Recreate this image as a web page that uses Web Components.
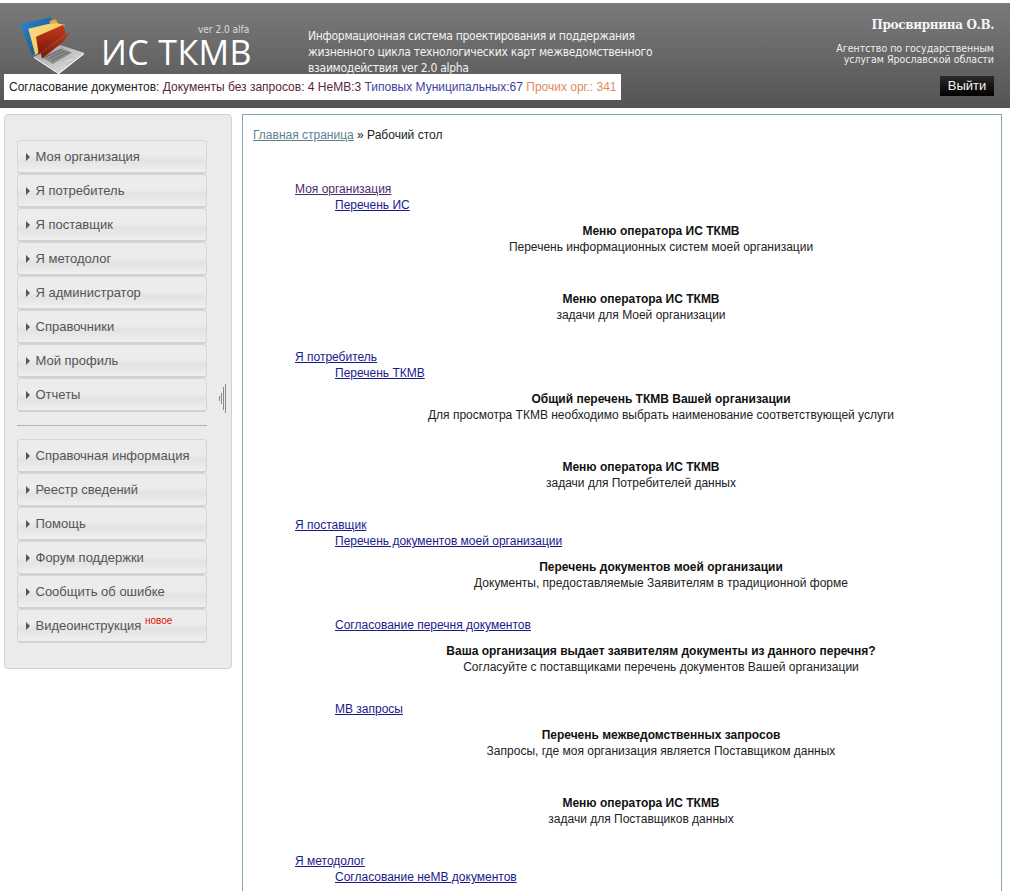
<!DOCTYPE html>
<html><head><meta charset="utf-8">
<style>
html,body{margin:0;padding:0;background:#fff;overflow:hidden;height:891px}
body{font-family:"Liberation Sans",Arial,sans-serif;font-size:12px;color:#000}
</style></head><body>
<template id="t-header"><style>
:host{display:block;height:105px;margin-top:3px;background:linear-gradient(#7a7a7a,#545454);position:relative;color:#fff}
.row{display:flex;height:73px}
.logo{width:296px;position:relative;flex:none}
.logo svg{position:absolute;left:10px;top:7px}
.ver{position:absolute;left:198px;top:21px;font:10px/12px "DejaVu Sans Condensed","DejaVu Sans",sans-serif;color:#ddd;white-space:nowrap}
.name{position:absolute;left:101px;top:34px;font:34px/30px "Open Sans","Liberation Sans",sans-serif;white-space:nowrap;letter-spacing:.4px;color:#fff}
.sys{margin-left:12px;padding-top:25px;font:12px/16px "DejaVu Sans Condensed","DejaVu Sans",sans-serif;color:#f2f2f2;width:350px;white-space:nowrap;letter-spacing:-.28px}
.user{margin-left:auto;padding:14px 16px 0 0;text-align:right}
.user b{display:block;font:bold 12px/16px "DejaVu Serif",serif;color:#f4f4f4;letter-spacing:-.35px}
.user span{display:block;margin-top:10px;font:10.5px/11px "DejaVu Sans Condensed","DejaVu Sans",sans-serif;color:#eee}
.status{position:absolute;left:4px;top:71px;background:#fff;height:26px;width:617px;box-sizing:border-box;padding-left:5px;font:12px/26px "Liberation Sans",sans-serif;white-space:nowrap;color:#222}
.a{color:#5a2440}.b{color:#3e3e9e}.c{color:#e08a5c}
.exit{position:absolute;right:16px;top:73px;width:54px;height:20px;background:linear-gradient(#2a2a2a,#000);font:13px/20px "Liberation Sans",sans-serif;text-align:center;color:#f4f4f4}
</style>
<div class="row">
<div class="logo">
<svg width="90" height="70" viewBox="0 0 270 210">
<defs>
<linearGradient id="bl" x1="0" y1="0" x2="1" y2="1"><stop offset="0" stop-color="#2b8ad0"/><stop offset="1" stop-color="#0f4a80"/></linearGradient>
<linearGradient id="ye" x1="0" y1="0" x2="1" y2="1"><stop offset="0" stop-color="#fbe08a"/><stop offset="1" stop-color="#eeb84a"/></linearGradient>
<linearGradient id="rd" x1="0" y1="0" x2="0" y2="1"><stop offset="0" stop-color="#c83a1c"/><stop offset="1" stop-color="#7c1606"/></linearGradient>
<linearGradient id="lp" x1="0" y1="0" x2="1" y2="1"><stop offset="0" stop-color="#9a9a9a"/><stop offset="1" stop-color="#ececec"/></linearGradient>
</defs>
<polygon points="72,140 150,105 222,128 145,188" fill="url(#lp)"/>
<polygon points="96,142 150,116 186,128 128,162" fill="#8c8c8c"/>
<path d="M106 141L160 116M116 146L170 120M126 152L178 125" stroke="#555" stroke-width="2" fill="none"/>
<polygon points="158,152 184,141 198,148 172,161" fill="#d4d4d4" stroke="#888"/>
<polygon points="72,140 145,188 222,128 222,133 146,193 72,144" fill="#fff"/>
<polygon points="30,42 122,22 130,42 60,60 76,130 66,135" fill="url(#bl)"/>
<polygon points="118,33 138,28 144,42 122,46" fill="#ee9f3c"/>
<polygon points="55,56 118,41 142,40 165,45 120,100 76,135" fill="url(#ye)"/>
<polygon points="78,80 160,44 166,72 95,125 86,132" fill="url(#rd)"/>
<polygon points="92,128 165,76 183,62 160,95 96,146" fill="url(#rd)"/>
</svg>
<div class="ver">ver 2.0 alfa</div>
<div class="name">ИС ТКМВ</div>
</div>
<div class="sys">Информационная система проектирования и поддержания<br>жизненного цикла технологических карт межведомственного<br>взаимодействия ver 2.0 alpha</div>
<div class="user"><b>Просвирнина О.В.</b><span>Агентство по государственным<br>услугам Ярославской области</span></div>
</div>
<div class="status">Согласование документов: <span class="a">Документы без запросов: 4 НеМВ:3</span> <span class="b">Типовых Муниципальных:67</span> <span class="c">Прочих орг.: 341</span></div>
<div class="exit">Выйти</div>
</template>

<template id="t-btn"><style>
:host{display:block;box-sizing:border-box;height:34px;border:1px solid #d6d6d6;border-bottom:2px solid #d2d2d2;border-radius:4px;background:linear-gradient(#ececec 0,#ececec 45%,#e3e3e3 62%,#efefef 100%);font:13px/32px "Liberation Sans",sans-serif;color:#555;padding-left:8px;white-space:nowrap}
i{display:inline-block;width:0;height:0;border-left:4px solid #555;border-top:4px solid transparent;border-bottom:4px solid transparent;margin-right:5.5px}
::slotted(sup){font-size:10px;color:#e01010;line-height:0;vertical-align:6px}
</style><i></i><slot></slot></template>

<template id="t-side"><style>
:host{display:block;box-sizing:border-box;width:228px;height:555px;background:#ebebeb;border:1px solid #d2d2d2;border-radius:4px;padding:25px 24px 0 12px;position:relative;flex:none}
hr{border:0;border-top:1px solid #b4b4b4;margin:13px 0 13px}
.grip{position:absolute;left:213px;top:269px;width:8px;height:29px}
</style><slot name="a"></slot><hr><slot name="b"></slot>
<svg class="grip" viewBox="0 0 8 29"><path d="M7.5 0V29M5.5 3V26M3.5 9V20M1.5 12V17" stroke="#8a8a8a" stroke-width="1" fill="none"/></svg>
</template>

<template id="t-content"><style>
:host{display:block;box-sizing:border-box;width:760px;height:800px;border:1px solid #86a7b0;border-bottom:0;padding:12px 10px 0 10px;margin-left:10px;font:12px/16px "Liberation Sans",sans-serif;color:#222;overflow:hidden}
.crumb a{color:#5f8090;text-decoration:underline}
.crumb{height:54px;color:#222}
</style><div class="crumb"><a>Главная страница</a> » Рабочий стол</div><slot></slot></template>

<template id="t-l1"><style>
:host{display:block;margin-left:42px;height:16px;font:12px/16px "Liberation Sans",sans-serif}
a{text-decoration:underline;color:var(--c,#1a1a8c)}
</style><a><slot></slot></a></template>

<template id="t-l2"><style>
:host{display:block;margin-left:82px;height:16px;font:12px/16px "Liberation Sans",sans-serif}
a{text-decoration:underline;color:#1a1a8c}
</style><a><slot></slot></a></template>

<template id="t-block"><style>
:host{display:block;text-align:center;padding-top:10px;height:68px;box-sizing:border-box;margin-left:78px}
:host([outer]){margin-left:38px}
b{display:block;font:bold 12px/16px "Liberation Sans",sans-serif;color:#111}
span{display:block;font:12px/16px "Liberation Sans",sans-serif;color:#222}
</style><b><slot name="t"></slot></b><span><slot name="d"></slot></span></template>

<template id="t-main"><style>
:host{display:flex;padding:6px 0 0 4px;align-items:flex-start}
</style><slot></slot></template>

<is-header></is-header>
<is-main>
<is-side>
<is-btn slot="a">Моя организация</is-btn><is-btn slot="a">Я потребитель</is-btn><is-btn slot="a">Я поставщик</is-btn><is-btn slot="a">Я методолог</is-btn><is-btn slot="a">Я администратор</is-btn><is-btn slot="a">Справочники</is-btn><is-btn slot="a">Мой профиль</is-btn><is-btn slot="a">Отчеты</is-btn>
<is-btn slot="b">Справочная информация</is-btn><is-btn slot="b">Реестр сведений</is-btn><is-btn slot="b">Помощь</is-btn><is-btn slot="b">Форум поддержки</is-btn><is-btn slot="b">Сообщить об ошибке</is-btn><is-btn slot="b">Видеоинструкция <sup>новое</sup></is-btn>
</is-side>
<is-content>
<is-l1 style="--c:#4b2b6b">Моя организация</is-l1>
<is-l2>Перечень ИС</is-l2>
<is-block><span slot="t">Меню оператора ИС ТКМВ</span><span slot="d">Перечень информационных систем моей организации</span></is-block>
<is-block outer><span slot="t">Меню оператора ИС ТКМВ</span><span slot="d">задачи для Моей организации</span></is-block>
<is-l1>Я потребитель</is-l1>
<is-l2>Перечень ТКМВ</is-l2>
<is-block><span slot="t">Общий перечень ТКМВ Вашей организации</span><span slot="d">Для просмотра ТКМВ необходимо выбрать наименование соответствующей услуги</span></is-block>
<is-block outer><span slot="t">Меню оператора ИС ТКМВ</span><span slot="d">задачи для Потребителей данных</span></is-block>
<is-l1>Я поставщик</is-l1>
<is-l2>Перечень документов моей организации</is-l2>
<is-block><span slot="t">Перечень документов моей организации</span><span slot="d">Документы, предоставляемые Заявителям в традиционной форме</span></is-block>
<is-l2>Согласование перечня документов</is-l2>
<is-block><span slot="t">Ваша организация выдает заявителям документы из данного перечня?</span><span slot="d">Согласуйте с поставщиками перечень документов Вашей организации</span></is-block>
<is-l2>МВ запросы</is-l2>
<is-block><span slot="t">Перечень межведомственных запросов</span><span slot="d">Запросы, где моя организация является Поставщиком данных</span></is-block>
<is-block outer><span slot="t">Меню оператора ИС ТКМВ</span><span slot="d">задачи для Поставщиков данных</span></is-block>
<is-l1>Я методолог</is-l1>
<is-l2>Согласование неМВ документов</is-l2>
</is-content>
</is-main>
<script>
for(const [n,t] of [['is-header','t-header'],['is-btn','t-btn'],['is-side','t-side'],['is-content','t-content'],['is-l1','t-l1'],['is-l2','t-l2'],['is-block','t-block'],['is-main','t-main']]){
 customElements.define(n,class extends HTMLElement{constructor(){super();this.attachShadow({mode:'open'}).appendChild(document.getElementById(t).content.cloneNode(true));}});
}
</script>
</body></html>
